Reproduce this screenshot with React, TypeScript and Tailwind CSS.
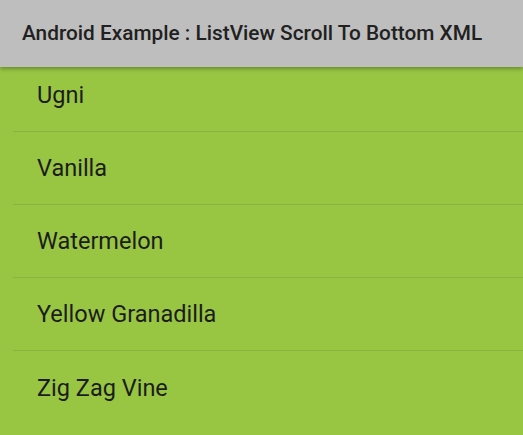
import React from 'react';

const fruits = ['Ugni', 'Vanilla', 'Watermelon', 'Yellow Granadilla', 'Zig Zag Vine'];

export default function App() {
  return (
    <div className="w-[523px] h-[435px] overflow-hidden bg-[#98c643] flex flex-col" style={{ fontFamily: 'Roboto, "Noto Sans", sans-serif' }}>
      {/* Toolbar */}
      <div className="relative z-10 h-[67px] shrink-0 bg-[#bebebe] flex items-center pl-[22px] shadow-[0_2px_4px_rgba(0,0,0,0.3)]">
        <h1 className="text-[20.8px] font-medium text-[#212121]">Android Example : ListView Scroll To Bottom XML</h1>
      </div>

      {/* List, scrolled to the bottom */}
      <ul className="-mt-[8px] flex flex-col">
        {fruits.map((name, i) => (
          <li
            key={name}
            className={`h-[73px] flex items-center ml-[13px] pl-[24px] pt-[2px] text-[23.5px] text-[#1c1c1c] ${i < fruits.length - 1 ? 'border-b border-[#88b440]' : ''}`}
          >
            {name}
          </li>
        ))}
      </ul>
    </div>
  );
}
